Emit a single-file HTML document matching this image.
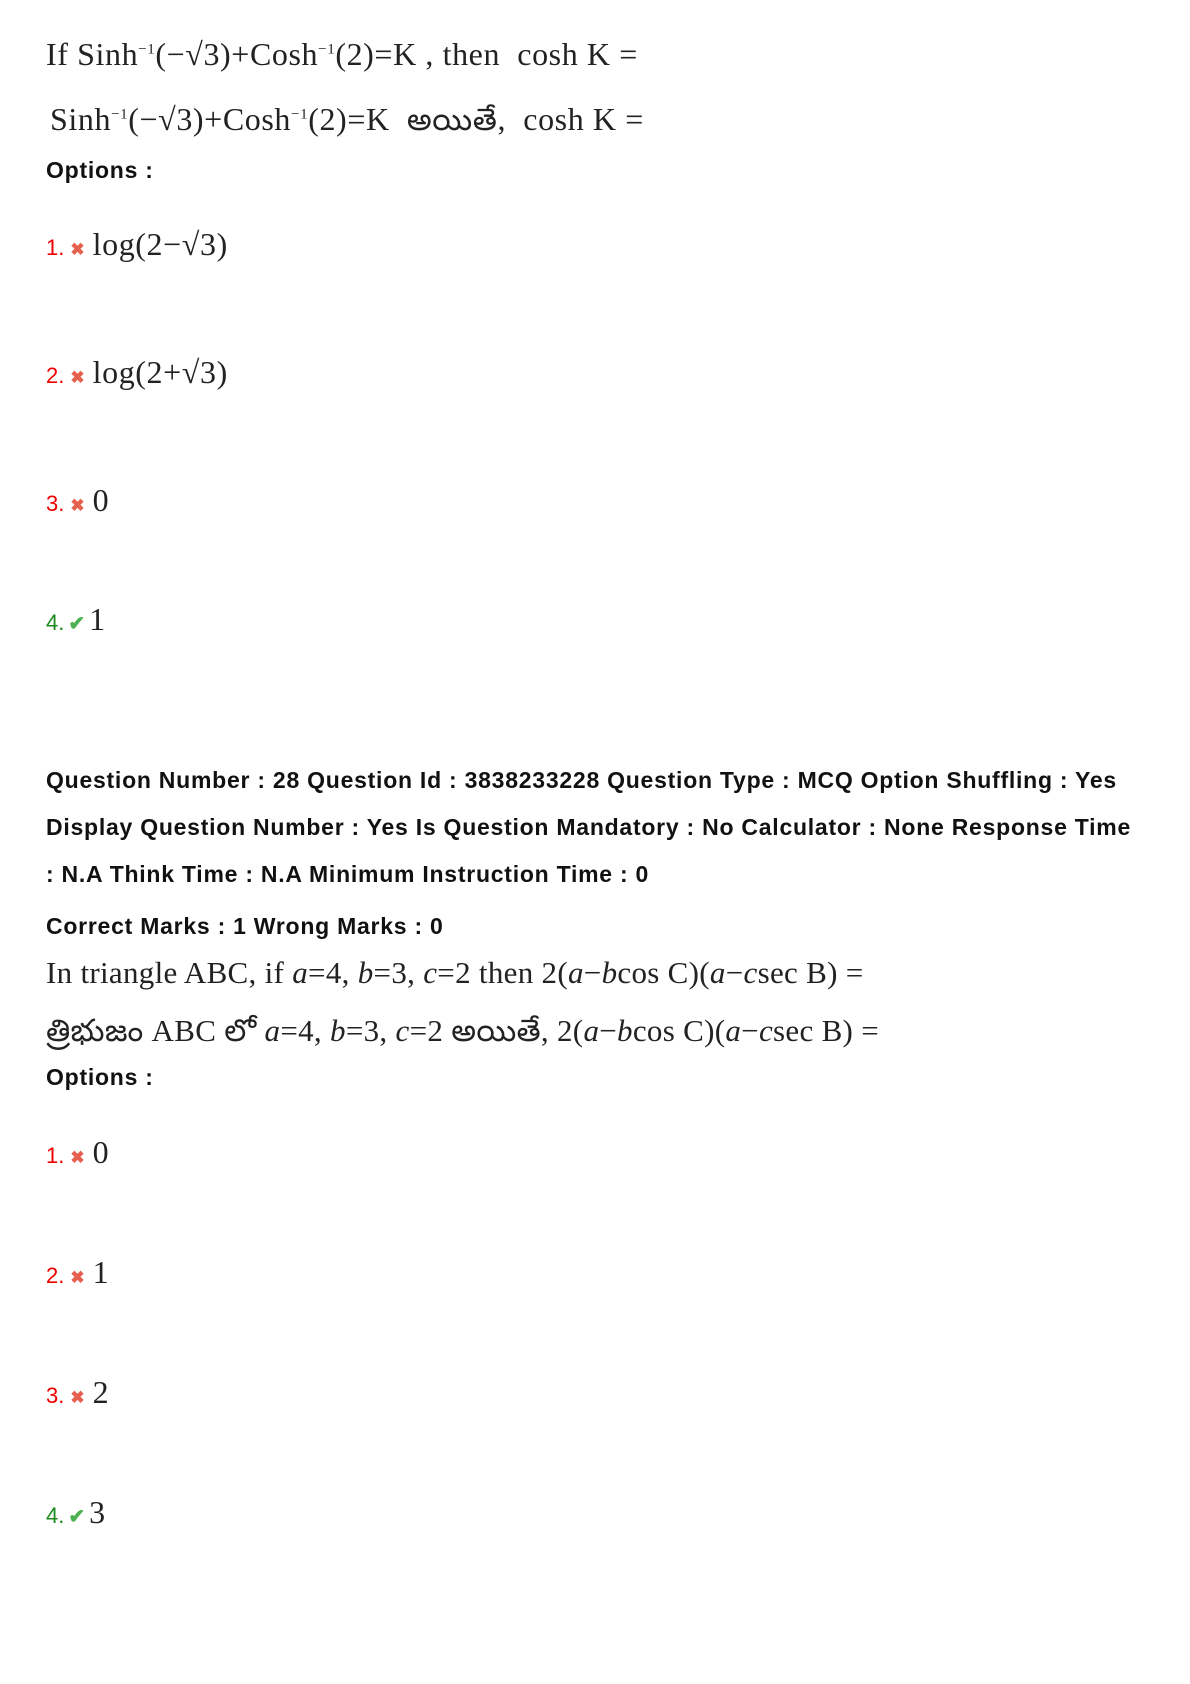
<!DOCTYPE html>
<html><head><meta charset="utf-8"><style>
body{margin:0;width:1190px;height:1684px;background:#fff;position:relative;overflow:hidden}
.a{position:absolute;left:46px;white-space:nowrap}
.m{font-family:"Liberation Serif",serif;font-size:32px;color:#222;letter-spacing:0.6px}
.b{font-family:"Liberation Sans",sans-serif;font-weight:bold;font-size:23px;color:#111;letter-spacing:0.75px}
.n{font-family:"Liberation Sans",sans-serif;font-size:22px}
.r{color:#e00}.g{color:#1a8a1a}
.x{color:#e5604f;font-size:17px;font-weight:bold;margin:0 8px 0 6px}
.c{color:#4caf50;font-size:20px;font-weight:bold;margin:0 4px 0 4px}
sup{font-size:15px}
i{font-style:italic}
.t{font-family:'Noto Sans CJK SC',sans-serif;font-size:31px}
</style></head><body>
<div class="a m" style="top:36px">If Sinh<sup>−1</sup>(−√3)+Cosh<sup>−1</sup>(2)=K , then &nbsp;cosh K =</div>
<div class="a m" style="top:94px;left:50px">Sinh<sup>−1</sup>(−√3)+Cosh<sup>−1</sup>(2)=K &nbsp;<span class="t">అయితే</span>, &nbsp;cosh K =</div>
<div class="a b" style="top:157px">Options :</div>

<div class="a" style="top:226px"><span class="n r">1.</span><span class="x">✖</span><span class="m">log(2−√3)</span></div>
<div class="a" style="top:354px"><span class="n r">2.</span><span class="x">✖</span><span class="m">log(2+√3)</span></div>
<div class="a" style="top:482px"><span class="n r">3.</span><span class="x">✖</span><span class="m">0</span></div>
<div class="a" style="top:601px"><span class="n g">4.</span><span class="c">✔</span><span class="m">1</span></div>

<div class="a b" style="top:767px">Question Number : 28 Question Id : 3838233228 Question Type : MCQ Option Shuffling : Yes</div>
<div class="a b" style="top:814px">Display Question Number : Yes Is Question Mandatory : No Calculator : None Response Time</div>
<div class="a b" style="top:861px">: N.A Think Time : N.A Minimum Instruction Time : 0</div>
<div class="a b" style="top:913px">Correct Marks : 1 Wrong Marks : 0</div>
<div class="a m" style="top:955px;font-size:31px;letter-spacing:0.3px">In triangle ABC, if <i>a</i>=4, <i>b</i>=3, <i>c</i>=2 then 2(<i>a</i>−<i>b</i>cos C)(<i>a</i>−<i>c</i>sec B) =</div>
<div class="a m" style="top:1005px;font-size:31px;letter-spacing:0.3px"><span class="t">త్రిభుజం</span> ABC <span class="t">లో</span> <i>a</i>=4, <i>b</i>=3, <i>c</i>=2 <span class="t">అయితే</span>, 2(<i>a</i>−<i>b</i>cos C)(<i>a</i>−<i>c</i>sec B) =</div>
<div class="a b" style="top:1064px">Options :</div>

<div class="a" style="top:1134px"><span class="n r">1.</span><span class="x">✖</span><span class="m">0</span></div>
<div class="a" style="top:1254px"><span class="n r">2.</span><span class="x">✖</span><span class="m">1</span></div>
<div class="a" style="top:1374px"><span class="n r">3.</span><span class="x">✖</span><span class="m">2</span></div>
<div class="a" style="top:1494px"><span class="n g">4.</span><span class="c">✔</span><span class="m">3</span></div>
</body></html>
